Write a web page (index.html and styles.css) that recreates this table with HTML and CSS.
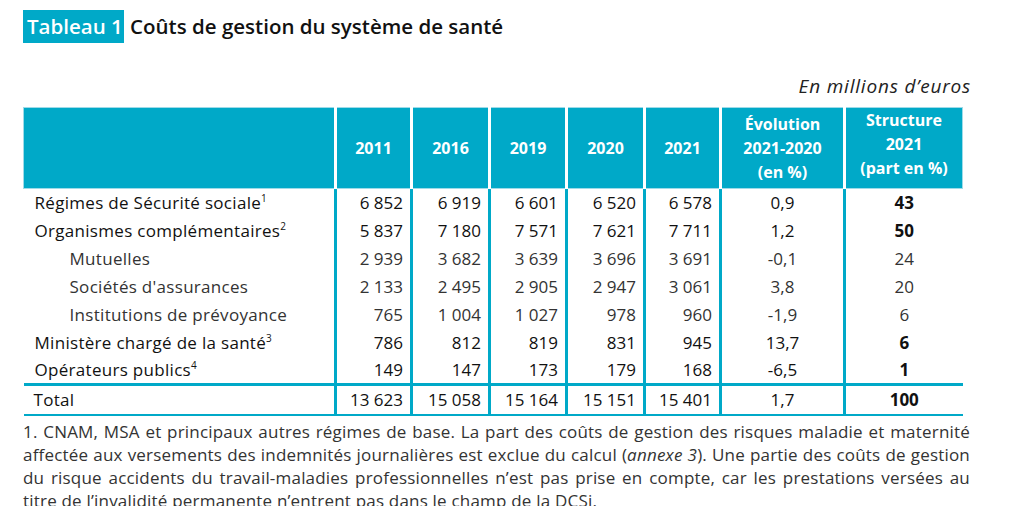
FILE: index.html
```html
<!DOCTYPE html>
<html lang="fr">
<head>
<meta charset="utf-8">
<title>Tableau 1</title>
<link rel="stylesheet" href="styles.css">
</head>
<body>
<div class="page">
  <h1 class="title"><span class="tag">Tableau 1</span> Coûts de gestion du système de santé</h1>
  <p class="unit">En millions d’euros</p>
  <table class="tbl">
    <thead>
      <tr>
        <th class="lbl"></th>
        <th>2011</th><th>2016</th><th>2019</th><th>2020</th><th>2021</th>
        <th>Évolution<br>2021-2020<br>(en %)</th>
        <th class="last">Structure<br>2021<br>(part en %)</th>
      </tr>
    </thead>
    <tbody>
      <tr class="main">
        <td class="lbl">Régimes de Sécurité sociale<sup>1</sup></td>
        <td>6&nbsp;852</td><td>6&nbsp;919</td><td>6&nbsp;601</td><td>6&nbsp;520</td><td>6&nbsp;578</td>
        <td class="ev">0,9</td><td class="st">43</td>
      </tr>
      <tr class="main">
        <td class="lbl">Organismes complémentaires<sup>2</sup></td>
        <td>5&nbsp;837</td><td>7&nbsp;180</td><td>7&nbsp;571</td><td>7&nbsp;621</td><td>7&nbsp;711</td>
        <td class="ev">1,2</td><td class="st">50</td>
      </tr>
      <tr class="sub">
        <td class="lbl">Mutuelles</td>
        <td>2&nbsp;939</td><td>3&nbsp;682</td><td>3&nbsp;639</td><td>3&nbsp;696</td><td>3&nbsp;691</td>
        <td class="ev">-0,1</td><td class="st">24</td>
      </tr>
      <tr class="sub">
        <td class="lbl">Sociétés d'assurances</td>
        <td>2&nbsp;133</td><td>2&nbsp;495</td><td>2&nbsp;905</td><td>2&nbsp;947</td><td>3&nbsp;061</td>
        <td class="ev">3,8</td><td class="st">20</td>
      </tr>
      <tr class="sub">
        <td class="lbl">Institutions de prévoyance</td>
        <td>765</td><td>1&nbsp;004</td><td>1&nbsp;027</td><td>978</td><td>960</td>
        <td class="ev">-1,9</td><td class="st">6</td>
      </tr>
      <tr class="main">
        <td class="lbl">Ministère chargé de la santé<sup>3</sup></td>
        <td>786</td><td>812</td><td>819</td><td>831</td><td>945</td>
        <td class="ev">13,7</td><td class="st">6</td>
      </tr>
      <tr class="main">
        <td class="lbl">Opérateurs publics<sup>4</sup></td>
        <td>149</td><td>147</td><td>173</td><td>179</td><td>168</td>
        <td class="ev">-6,5</td><td class="st">1</td>
      </tr>
      <tr class="total">
        <td class="lbl">Total</td>
        <td>13&nbsp;623</td><td>15&nbsp;058</td><td>15&nbsp;164</td><td>15&nbsp;151</td><td>15&nbsp;401</td>
        <td class="ev">1,7</td><td class="st">100</td>
      </tr>
    </tbody>
  </table>
  <p class="note">1. CNAM, MSA et principaux autres régimes de base. La part des coûts de gestion des risques maladie et maternité affectée aux versements des indemnités journalières est exclue du calcul (<i>annexe 3</i>). Une partie des coûts de gestion du risque accidents du travail-maladies professionnelles n’est pas prise en compte, car les prestations versées au titre de l’invalidité permanente n’entrent pas dans le champ de la DCSi.</p>
</div>
</body>
</html>
```

FILE: styles.css
```css
* { box-sizing: border-box; }
html, body { margin: 0; padding: 0; background: #fff; }
body {
  font-family: "Open Sans", "Liberation Sans", sans-serif;
  color: #1e1e1e;
  height: 506px;
  overflow: hidden;
}
.page {
  padding: 10px 0 0 23px;
  width: 971px;
}
.title {
  margin: 0;
  font-size: 20.5px;
  font-weight: 600;
  line-height: 33px;
  color: #111;
}
.tag {
  display: inline-block;
  background: #00a9c8;
  color: #fff;
  padding: 0 1px 0 4px;
  margin-right: 1px;
}
.unit {
  margin: 30px 0 0;
  text-align: right;
  font-style: italic;
  font-size: 19px;
  line-height: 26px;
  letter-spacing: 0.8px;
  color: #222;
}
.tbl {
  margin-top: 8px;
  width: 940px;
  border-collapse: collapse;
  table-layout: fixed;
}
.tbl th {
  background: #00a9c8;
  color: #fff;
  font-weight: 700;
  font-size: 16px;
  line-height: 24px;
  height: 80px;
  padding: 0;
  text-align: center;
  vertical-align: middle;
  border-right: 3px solid #fff;
  border-top: 1px solid #9edbe8;
  border-bottom: 1px solid #9edbe8;
}
.tbl th:first-child { border-left: 1px solid #9edbe8; width: 312px; }
.tbl th:nth-child(2) { width: 76px; }
.tbl th:nth-child(3) { width: 78px; }
.tbl th:nth-child(4) { width: 77px; }
.tbl th:nth-child(5) { width: 78px; }
.tbl th:nth-child(6) { width: 76px; }
.tbl th:nth-child(7) { width: 124px; }
.tbl th.last { border-right: 1px solid #9edbe8; padding-bottom: 8px; }
.tbl td {
  height: 28px;
  padding: 0 7px 0 0;
  font-size: 17px;
  text-align: right;
  vertical-align: middle;
  border-right: 3px solid #00a9c8;
  white-space: nowrap;
}
.tbl td:last-child { border-right: none; }
.tbl td.lbl { text-align: left; padding-left: 11px; letter-spacing: 0.3px; }
.tbl td.ev, .tbl td.st { text-align: center; padding: 0; }
.tbl tr.main td { color: #111; font-weight: 500; }
.tbl tr.main td.st { font-weight: 700; }
.tbl tr.sub td { color: #333; font-weight: 400; }
.tbl tr.sub td.lbl { padding-left: 46px; }
.tbl tr.total td {
  border-top: 3px solid #00a9c8;
  border-bottom: 2px solid #00a9c8;
  color: #111;
  height: 30px;
}
.tbl tr.total td.st { font-weight: 700; }
.tbl tr.total td.lbl { padding-left: 10px; }
sup { font-size: 10px; line-height: 0; vertical-align: 7px; letter-spacing: 0; }
.note {
  margin: 4px 0 0;
  width: 947px;
  font-size: 17px;
  line-height: 23px;
  letter-spacing: 0.2px;
  color: #333;
  text-align: justify;
}
```
